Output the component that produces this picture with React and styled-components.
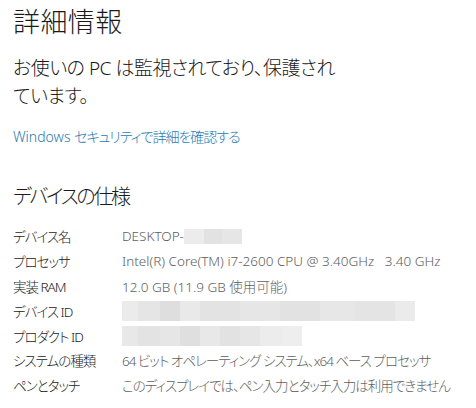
import React from 'react'
import styled, { createGlobalStyle } from 'styled-components'

const GlobalStyle = createGlobalStyle`
  html, body {
    margin: 0;
    padding: 0;
    background: #ffffff;
  }
  body {
    font-family: "Noto Sans", "Noto Sans CJK JP", sans-serif;
    font-feature-settings: "palt";
    color: #1a1a1a;
  }
`

const Page = styled.div`
  width: 476px;
  height: 408px;
  overflow: hidden;
  padding: 0 13px;
  box-sizing: border-box;
`

const Title = styled.h1`
  margin: 0;
  padding-top: 4px;
  font-size: 27px;
  font-weight: 300;
  line-height: 36px;
  letter-spacing: 0.4px;
  color: #1a1a1a;
`

const Status = styled.p`
  margin: 14px 0 0;
  font-size: 19px;
  font-weight: 300;
  line-height: 28px;
  letter-spacing: -0.5px;
  color: #1a1a1a;
`

const Link = styled.a`
  display: inline-block;
  margin-top: 17px;
  font-size: 14px;
  font-weight: 300;
  line-height: 20px;
  color: #2a7ab0;
  text-decoration: none;
`

const Tight = styled.span`
  letter-spacing: -1px;
`

const Section = styled.h2`
  margin: 36px 0 0;
  font-size: 20px;
  font-weight: 300;
  line-height: 28px;
  letter-spacing: -2.3px;
  color: #1a1a1a;
`

const Specs = styled.div`
  margin-top: 13px;
  display: grid;
  grid-template-columns: 109px 1fr;
  grid-auto-rows: 24.8px;
  align-items: center;
  font-size: 13.5px;
  font-weight: 300;
`

const Label = styled.div`
  color: #1a1a1a;
  white-space: nowrap;
  letter-spacing: -1px;
`

const Value = styled.div`
  color: #5e5e5e;
  white-space: nowrap;
  display: flex;
  align-items: center;
  height: 100%;
  letter-spacing: ${p => (p.$cjk ? '-1px' : '0')};
`

const Blur = styled.div`
  display: flex;
  height: ${p => p.$h || 20}px;
`

const Cell = styled.span`
  display: block;
  width: ${p => p.$w}px;
  height: 100%;
  background: ${p => p.$c};
`

const nameCells = [
  [20, '#ececec'], [18, '#e2e2e2'], [20, '#e6e6e6'],
]
const idCells = [
  [16, '#ebebeb'], [22, '#e5e5e5'], [20, '#dedede'], [20, '#e9e9e9'], [40, '#e3e3e3'],
  [40, '#e6e6e6'], [40, '#e2e2e2'], [35, '#e7e7e7'], [40, '#e4e4e4'], [20, '#ebebeb'],
]
const productCells = [
  [16, '#e8e8e8'], [22, '#e3e3e3'], [20, '#e6e6e6'], [20, '#dfdfdf'], [20, '#e8e8e8'],
  [20, '#e2e2e2'], [20, '#e6e6e6'], [22, '#ececec'], [20, '#eeeeee'],
]

const Pixelated = ({ cells, h }) => (
  <Blur $h={h}>
    {cells.map(([w, c], i) => <Cell key={i} $w={w} $c={c} />)}
  </Blur>
)

const App = () => (
  <>
    <GlobalStyle />
    <Page>
      <Title>詳細情報</Title>
      <Status>お使いの PC は監視されており、保護され<br />ています。</Status>
      <Link href="#">Windows <Tight>セキュリティで詳細を確認する</Tight></Link>
      <Section>デバイスの仕様</Section>
      <Specs>
        <Label>デバイス名</Label>
        <Value>DESKTOP-<Pixelated cells={nameCells} h={15} /></Value>
        <Label>プロセッサ</Label>
        <Value>Intel(R) Core(TM) i7-2600 CPU @ 3.40GHz&nbsp;&nbsp;&nbsp;3.40 GHz</Value>
        <Label>実装 RAM</Label>
        <Value>12.0 GB (11.9 GB 使用可能)</Value>
        <Label>デバイス ID</Label>
        <Value><Pixelated cells={idCells} h={20} /></Value>
        <Label>プロダクト ID</Label>
        <Value><Pixelated cells={productCells} h={20} /></Value>
        <Label>システムの種類</Label>
        <Value $cjk>64 ビット オペレーティング システム、x64 ベース プロセッサ</Value>
        <Label>ペンとタッチ</Label>
        <Value $cjk>このディスプレイでは、ペン入力とタッチ入力は利用できません</Value>
      </Specs>
    </Page>
  </>
)

export default App
